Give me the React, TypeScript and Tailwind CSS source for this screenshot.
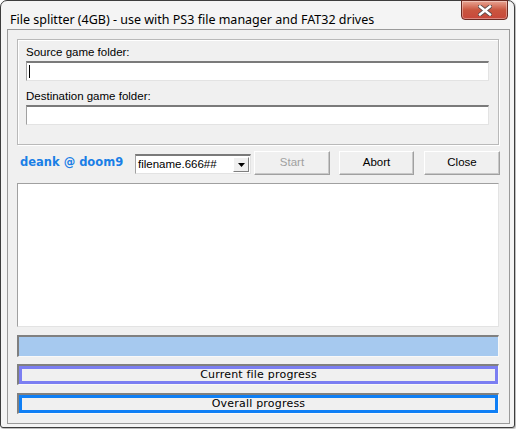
import React from 'react'

const ui = { fontFamily: '"Liberation Sans", Arial, sans-serif' }
const verdana = { fontFamily: '"DejaVu Sans", Verdana, sans-serif' }

function Sunken({ className = '', children }: { className?: string; children?: React.ReactNode }) {
  return (
    <div className={`border-t-[2px] border-l border-b border-r border-t-[#7a7a7a] border-l-[#a0a0a0] border-b-[#e3e3e3] border-r-[#e3e3e3] ${className}`}>
      {children}
    </div>
  )
}

function Button({ label, disabled, width }: { label: string; disabled?: boolean; width: string }) {
  return (
    <div
      className={`${width} shrink-0 h-[24px] flex items-center justify-center bg-[#f0f0f0] border border-t-white border-l-white border-b-[#a0a0a0] border-r-[#a0a0a0] shadow-[inset_-1px_-1px_0_#c8c8c8] text-[11.5px] ${disabled ? 'text-[#a0a0a0]' : 'text-black'}`}
      style={ui}
    >
      {label}
    </div>
  )
}

function ProgressLabel({ label, color }: { label: string; color: string }) {
  return (
    <div className="h-[21px] border-t-[2px] border-l-[2px] border-b border-r border-t-[#808080] border-l-[#808080] border-b-[#f8f8f8] border-r-[#f8f8f8]">
      <div className={`h-full border-[3px] ${color} bg-[#f0f0f0] flex items-center justify-center text-[11px] text-black tracking-[0.2px]`} style={verdana}>
        {label}
      </div>
    </div>
  )
}

export default function App() {
  return (
    <div className="w-[516px] h-[429px] bg-white overflow-hidden">
      <div className="w-[515px] h-[428px] rounded-t-[7px] rounded-b-[3px] border border-[#3d3d3d] bg-[#f4f4f4] shadow-[1px_1px_2px_rgba(0,0,0,0.35)] flex flex-col">
        {/* title bar */}
        <div className="h-[28px] flex items-start justify-between pl-[9px] pr-[6px]">
          <span className="pt-[11px] text-[12.5px] leading-[16px] text-black" style={{ fontFamily: '"Noto Sans", "Open Sans", sans-serif' }}>
            File splitter (4GB) - use with PS3 file manager and FAT32 drives
          </span>
          <div className="w-[47px] h-[20px] mt-[-1px] rounded-b-[4px] border border-[#6b2a22] bg-gradient-to-b from-[#e8a493] via-[#c9553f] to-[#c8473a] flex items-center justify-center shadow-[inset_0_0_0_1px_rgba(255,255,255,0.35)]">
            <svg width="14" height="11" viewBox="0 0 14 11">
              <path d="M2 1.5 L12 9.5 M12 1.5 L2 9.5" stroke="#5a4a48" strokeWidth="4.2" strokeLinecap="square" />
              <path d="M2 1.5 L12 9.5 M12 1.5 L2 9.5" stroke="#ffffff" strokeWidth="2.4" strokeLinecap="square" />
            </svg>
          </div>
        </div>

        {/* client area */}
        <div className="flex-1 ml-[6px] mr-[4px] mb-[3px] border border-[#9a9a9a] bg-[#f0f0f0] pt-[9px] pl-[9px] pr-[10px] flex flex-col" style={ui}>
          {/* group box */}
          <div className="h-[106px] border border-[#b9b9b9] shadow-[inset_1px_1px_0_#ffffff,1px_1px_0_#ffffff] pl-[8px] pr-[9px] pt-[5px] flex flex-col">
            <div className="text-[11.5px] leading-[14px] text-black">Source game folder:</div>
            <Sunken className="mt-[2px] h-[20px] bg-white flex items-center pl-[2px]">
              <span className="w-[1px] h-[13px] bg-black" />
            </Sunken>
            <div className="mt-[8px] text-[11.5px] leading-[14px] text-black">Destination game folder:</div>
            <Sunken className="mt-[2px] h-[20px] bg-white" />
          </div>

          {/* controls row */}
          <div className="mt-[6px] h-[24px] flex items-center">
            <span className="ml-[3px] w-[115px] shrink-0 font-bold text-[#1a7fe6]" style={{ fontFamily: '"DejaVu Sans", Tahoma, sans-serif', fontSize: '11.5px' }}>
              deank @ doom9
            </span>
            <Sunken className="w-[116px] shrink-0 h-[20px] mt-[2px] bg-white flex items-center justify-between pl-[2px] pr-[1px]">
              <span className="text-[11.5px] text-black leading-none" style={ui}>filename.666##</span>
              <div className="w-[16px] h-[15px] bg-[#f0f0f0] border border-t-white border-l-white border-b-[#808080] border-r-[#808080] flex items-center justify-center">
                <svg width="7" height="4" viewBox="0 0 7 4">
                  <path d="M0 0 H7 L3.5 4 Z" fill="#000" />
                </svg>
              </div>
            </Sunken>
            <div className="ml-[3px] flex shrink-0">
              <Button label="Start" disabled width="w-[76px]" />
              <div className="w-[9px] shrink-0" />
              <Button label="Abort" width="w-[75px]" />
              <div className="w-[10px] shrink-0" />
              <Button label="Close" width="w-[76px]" />
            </div>
          </div>

          {/* log area */}
          <div className="mt-[8px] h-[144px] bg-white border border-t-[#a0a0a0] border-l-[#a0a0a0] border-b-[#e3e3e3] border-r-[#e3e3e3]" />

          {/* progress bar */}
          <div className="mt-[8px] h-[22px] border-t-[2px] border-l-[2px] border-b border-r border-t-[#808080] border-l-[#808080] border-b-[#f8f8f8] border-r-[#f8f8f8] bg-[#a6c9ef]" />

          <div className="mt-[7px]">
            <ProgressLabel label="Current file progress" color="border-[#7b7ef2]" />
          </div>
          <div className="mt-[8px]">
            <ProgressLabel label="Overall progress" color="border-[#0f7ff5]" />
          </div>
        </div>
      </div>
    </div>
  )
}
